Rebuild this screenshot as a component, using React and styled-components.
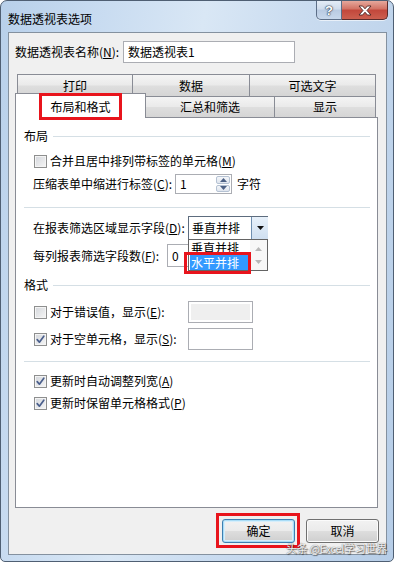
import styled, { createGlobalStyle } from "styled-components";

const GlobalStyle = createGlobalStyle`
  html, body {
    margin: 0;
    padding: 0;
    background: #fff;
  }
  body {
    font-family: "Noto Sans CJK SC", "Liberation Sans", sans-serif;
    font-size: 12px;
    color: #000;
  }
  * {
    box-sizing: border-box;
  }
`;

const RED = "#e8141c";

export default function App() {
  return (
    <Window>
      <GlobalStyle />
      <TitleBar>
        <Title>数据透视表选项</Title>
        <CaptionGroup>
          <HelpButton>?</HelpButton>
          <CloseButton>
            <svg width="14" height="11" viewBox="0 0 14 11">
              <polygon
                points="1,1 4.6,1 7,3.8 9.4,1 13,1 9,5.5 13,10 9.4,10 7,7.2 4.6,10 1,10 5,5.5"
                fill="#fff"
                stroke="#4a2422"
                strokeWidth="0.9"
                strokeLinejoin="round"
              />
            </svg>
          </CloseButton>
        </CaptionGroup>
      </TitleBar>

      <Client>
        <NameRow>
          <Label $w={108}>
            数据透视表名称(<u>N</u>):
          </Label>
          <TextBox $w={172} $h={22}>数据透视表1</TextBox>
        </NameRow>

        <TabStrip>
          <TabRow $pl={2}>
            <Tab $w={116} $h={22}>打印</Tab>
            <Tab $w={118} $h={22}>数据</Tab>
            <Tab $w={127} $h={22}>可选文字</Tab>
          </TabRow>
          <TabRow>
            <ActiveTab $w={131}>
              <TabMark>布局和格式</TabMark>
            </ActiveTab>
            <Tab $w={130} $h={21}>汇总和筛选</Tab>
            <Tab $w={102} $h={21}>显示</Tab>
          </TabRow>
        </TabStrip>

        <Panel>
          <GroupTitle>
            布局
            <Rule />
          </GroupTitle>

          <CheckRow $h={16} $mt={9}>
            <CheckBox />
            <CheckText>
              合并且居中排列带标签的单元格(<u>M</u>)
            </CheckText>
          </CheckRow>

          <FieldRow $h={20} $mt={5}>
            <Label $w={142}>
              压缩表单中缩进行标签(<u>C</u>):
            </Label>
            <SpinBox>
              <SpinValue>1</SpinValue>
              <SpinButtons>
                <SpinHalf>
                  <svg width="7" height="4" viewBox="0 0 7 4">
                    <polygon points="0,4 3.5,0 7,4" fill="#4d6185" />
                  </svg>
                </SpinHalf>
                <SpinHalf>
                  <svg width="7" height="4" viewBox="0 0 7 4">
                    <polygon points="0,0 3.5,4 7,0" fill="#4d6185" />
                  </svg>
                </SpinHalf>
              </SpinButtons>
            </SpinBox>
            <Suffix>字符</Suffix>
          </FieldRow>

          <Separator $mt={13} />

          <FieldRow $h={24} $mt={8}>
            <Label $w={155}>
              在报表筛选区域显示字段(<u>D</u>):
            </Label>
            <Combo>
              <ComboValue>垂直并排</ComboValue>
              <ComboArrow>
                <svg width="7" height="4" viewBox="0 0 7 4">
                  <polygon points="0,0 3.5,4 7,0" fill="#111" />
                </svg>
              </ComboArrow>
              <DropList>
                <DropItems>
                  <DropItem>垂直并排</DropItem>
                  <DropItem $selected>水平并排</DropItem>
                </DropItems>
                <DropScroll>
                  <svg width="7" height="4" viewBox="0 0 7 4">
                    <polygon points="0,4 3.5,0 7,4" fill="#b8b8b8" />
                  </svg>
                  <svg width="7" height="4" viewBox="0 0 7 4">
                    <polygon points="0,0 3.5,4 7,0" fill="#b8b8b8" />
                  </svg>
                </DropScroll>
              </DropList>
            </Combo>
          </FieldRow>

          <FieldRow $h={23} $mt={4}>
            <Label $w={134}>
              每列报表筛选字段数(<u>F</u>):
            </Label>
            <TextBox $w={65} $h={23}>0</TextBox>
          </FieldRow>

          <GroupTitle $mt={10}>
            格式
            <Rule />
          </GroupTitle>

          <CheckRow $h={22} $mt={8}>
            <CheckBox />
            <CheckText $w={138}>
              对于错误值，显示(<u>E</u>):
            </CheckText>
            <TextBox $w={65} $h={22} $disabled />
          </CheckRow>

          <CheckRow $h={22} $mt={5}>
            <CheckBox $checked />
            <CheckText $w={138}>
              对于空单元格，显示(<u>S</u>):
            </CheckText>
            <TextBox $w={65} $h={22} />
          </CheckRow>

          <Separator $mt={11} />

          <CheckRow $h={16} $mt={11}>
            <CheckBox $checked />
            <CheckText>
              更新时自动调整列宽(<u>A</u>)
            </CheckText>
          </CheckRow>

          <CheckRow $h={16} $mt={6}>
            <CheckBox $checked />
            <CheckText>
              更新时保留单元格格式(<u>P</u>)
            </CheckText>
          </CheckRow>
        </Panel>

        <ButtonRow>
          <DialogButton $default>确定</DialogButton>
          <DialogButton>取消</DialogButton>
        </ButtonRow>
      </Client>

      <Watermark>头条 @Excel学习世界</Watermark>
    </Window>
  );
}

function CheckBox({ $checked }) {
  return (
    <Box>
      {$checked && (
        <svg width="11" height="11" viewBox="0 0 11 11">
          <path
            d="M2.2 5.6 L4.4 8.2 L8.8 2.2"
            fill="none"
            stroke="#4a5f8c"
            strokeWidth="1.7"
            strokeLinecap="round"
            strokeLinejoin="round"
          />
        </svg>
      )}
    </Box>
  );
}

const Window = styled.div`
  position: relative;
  width: 394px;
  height: 562px;
  display: flex;
  flex-direction: column;
  padding: 0 6px 6px 7px;
  border: 1px solid #4f5f73;
  border-radius: 7px 7px 5px 5px;
  background: linear-gradient(
    100deg,
    #b8d0ea 0%,
    #c6daf0 18%,
    #d9e7f5 42%,
    #cadcf0 62%,
    #b6cde7 100%
  );
  overflow: hidden;
`;

const TitleBar = styled.div`
  height: 31px;
  display: flex;
  align-items: flex-start;
  flex-shrink: 0;
`;

const Title = styled.div`
  margin-top: 9px;
  line-height: 17px;
  font-size: 12px;
  color: #000;
`;

const CaptionGroup = styled.div`
  margin-left: auto;
  margin-right: -1px;
  display: flex;
  box-shadow: 0 1px 0 rgba(255, 255, 255, 0.6);
  border-radius: 0 0 5px 5px;
`;

const HelpButton = styled.div`
  width: 26px;
  height: 19px;
  border: 1px solid #5c6e87;
  border-top: none;
  border-radius: 0 0 0 5px;
  background: linear-gradient(#e3ecf6, #cfdcec 45%, #b9cbe2 50%, #c8d8ec);
  display: flex;
  align-items: center;
  justify-content: center;
  font-family: "Liberation Sans", sans-serif;
  font-weight: bold;
  font-size: 13px;
  color: #fff;
  text-shadow: 0 0 1px #2e3e55, 0 0 1px #2e3e55, 0 0 2px #2e3e55;
`;

const CloseButton = styled.div`
  width: 46px;
  height: 19px;
  border: 1px solid #5a2b2b;
  border-top: none;
  border-left: none;
  border-radius: 0 0 5px 0;
  background: linear-gradient(#e6a89c, #d27163 45%, #c2473b 50%, #cc5f4f);
  display: flex;
  align-items: center;
  justify-content: center;
`;

const Client = styled.div`
  flex: 1;
  display: flex;
  flex-direction: column;
  border: 1px solid #84919f;
  background: #f0f0f0;
  padding: 8px 8px 0 6px;
`;

const NameRow = styled.div`
  display: flex;
  align-items: center;
  height: 22px;
`;

const Label = styled.span`
  width: ${(p) => p.$w}px;
  flex-shrink: 0;
  white-space: nowrap;
  line-height: 16px;
`;

const TextBox = styled.div`
  width: ${(p) => p.$w}px;
  height: ${(p) => p.$h}px;
  flex-shrink: 0;
  border: 1px solid #abadb3;
  background: ${(p) => (p.$disabled ? "#efefef" : "#fff")};
  box-shadow: ${(p) => (p.$disabled ? "inset 0 0 0 2px #fff" : "none")};
  padding-left: 4px;
  line-height: ${(p) => p.$h - 2}px;
  white-space: nowrap;
`;

const TabStrip = styled.div`
  margin-top: 11px;
  display: flex;
  flex-direction: column;
`;

const TabRow = styled.div`
  display: flex;
  align-items: flex-end;
  padding-left: ${(p) => p.$pl || 0}px;
`;

const Tab = styled.div`
  width: ${(p) => p.$w}px;
  height: ${(p) => p.$h}px;
  margin-right: -1px;
  border: 1px solid #898c95;
  border-bottom: none;
  background: linear-gradient(#f4f4f4, #eaeaea 48%, #dedede 52%, #d5d5d5);
  display: flex;
  align-items: center;
  justify-content: center;
  line-height: 16px;
`;

const ActiveTab = styled.div`
  width: ${(p) => p.$w}px;
  height: 25px;
  margin-top: -3px;
  margin-bottom: -1px;
  margin-right: -1px;
  z-index: 1;
  border: 1px solid #898c95;
  border-bottom: none;
  background: #fff;
  display: flex;
  align-items: center;
  justify-content: center;
`;

const TabMark = styled.span`
  display: inline-block;
  padding: 2px 8px;
  line-height: 17px;
  outline: 3px solid ${RED};
`;

const Panel = styled.div`
  height: 391px;
  flex-shrink: 0;
  border: 1px solid #898c95;
  background: #fff;
  padding: 10px 7px 0 8px;
  display: flex;
  flex-direction: column;
`;

const GroupTitle = styled.div`
  display: flex;
  align-items: center;
  gap: 5px;
  height: 16px;
  line-height: 16px;
  margin-top: ${(p) => p.$mt || 0}px;
`;

const Rule = styled.span`
  flex: 1;
  height: 1px;
  background: #d5dfe5;
`;

const Separator = styled.div`
  height: 1px;
  background: #d5dfe5;
  margin-top: ${(p) => p.$mt}px;
`;

const CheckRow = styled.div`
  display: flex;
  align-items: center;
  height: ${(p) => p.$h}px;
  margin-top: ${(p) => p.$mt}px;
  padding-left: 10px;
`;

const FieldRow = styled.div`
  display: flex;
  align-items: center;
  height: ${(p) => p.$h}px;
  margin-top: ${(p) => p.$mt}px;
  padding-left: 9px;
`;

const Box = styled.span`
  width: 13px;
  height: 13px;
  flex-shrink: 0;
  border: 1px solid #8e8f8f;
  background: linear-gradient(135deg, #d3d6db, #f6f6f6);
  box-shadow: inset 0 0 0 1px #f4f4f4;
  display: flex;
  align-items: center;
  justify-content: center;
`;

const CheckText = styled.span`
  margin-left: 3px;
  line-height: 16px;
  white-space: nowrap;
  width: ${(p) => (p.$w ? `${p.$w}px` : "auto")};
  flex-shrink: 0;
`;

const SpinBox = styled.div`
  width: 57px;
  height: 20px;
  border: 1px solid #abadb3;
  background: #fff;
  display: flex;
`;

const SpinValue = styled.span`
  flex: 1;
  padding-left: 4px;
  line-height: 18px;
`;

const SpinButtons = styled.div`
  width: 15px;
  display: flex;
  flex-direction: column;
  gap: 1px;
  padding: 1px 1px 1px 0;
`;

const SpinHalf = styled.div`
  flex: 1;
  border: 1px solid #b5c2d3;
  border-radius: 2px;
  background: linear-gradient(#f4f6f9, #dfe5ee);
  display: flex;
  align-items: center;
  justify-content: center;
`;

const Suffix = styled.span`
  margin-left: 5px;
  line-height: 16px;
`;

const Combo = styled.div`
  position: relative;
  width: 80px;
  height: 24px;
  border: 1px solid #5d6c7e;
  background: #fff;
  display: flex;
  z-index: 2;
`;

const ComboValue = styled.span`
  flex: 1;
  padding-left: 3px;
  line-height: 22px;
`;

const ComboArrow = styled.div`
  width: 17px;
  margin: 0 -1px 0 0;
  border-left: 1px solid #6f8fb0;
  background: linear-gradient(#e8f1fa, #cfdff0);
  display: flex;
  align-items: center;
  justify-content: center;
`;

const DropList = styled.div`
  position: absolute;
  left: -1px;
  top: 22px;
  width: 80px;
  height: 32px;
  border: 1px solid #646464;
  background: #fff;
  display: flex;
`;

const DropItems = styled.div`
  flex: 1;
  padding: 0 1px;
  display: flex;
  flex-direction: column;
`;

const DropItem = styled.div`
  position: relative;
  height: 15px;
  line-height: 15px;
  padding-left: 1px;
  background: ${(p) => (p.$selected ? "#3399ff" : "transparent")};
  color: ${(p) => (p.$selected ? "#fff" : "#000")};

  ${(p) =>
    p.$selected &&
    `
    &::after {
      content: "";
      position: absolute;
      left: -6px;
      right: -2px;
      top: -3px;
      bottom: -4px;
      border: 3px solid ${RED};
    }
  `}
`;

const DropScroll = styled.div`
  width: 17px;
  background: #f7f7f7;
  display: flex;
  flex-direction: column;
  align-items: center;
  justify-content: space-around;
  padding: 2px 0;
`;

const ButtonRow = styled.div`
  display: flex;
  justify-content: flex-end;
  gap: 11px;
  margin-top: 11px;
  margin-right: -1px;
`;

const DialogButton = styled.div`
  position: relative;
  width: 73px;
  height: 24px;
  border: 1px solid ${(p) => (p.$default ? "#3c7fb1" : "#707070")};
  border-radius: 3px;
  background: linear-gradient(#f2f2f2, #ebebeb 48%, #dddddd 52%, #cfcfcf);
  box-shadow: ${(p) =>
    p.$default
      ? "inset 0 0 0 1px #a9dcf6, inset 0 0 0 2px #d6eefb"
      : "inset 0 0 0 1px #fbfbfb"};
  display: flex;
  align-items: center;
  justify-content: center;
  line-height: 16px;

  ${(p) =>
    p.$default &&
    `
    &::after {
      content: "";
      position: absolute;
      left: -7px;
      right: -6px;
      top: -7px;
      bottom: -6px;
      border: 3px solid ${RED};
    }
  `}
`;

const Watermark = styled.div`
  position: absolute;
  left: 285px;
  top: 540px;
  line-height: 15px;
  font-size: 11px;
  letter-spacing: -0.3px;
  white-space: nowrap;
  color: rgba(255, 255, 255, 0.92);
  text-shadow: 0 0 1px #4d4d4d, 1px 1px 1px rgba(0, 0, 0, 0.55);
`;
